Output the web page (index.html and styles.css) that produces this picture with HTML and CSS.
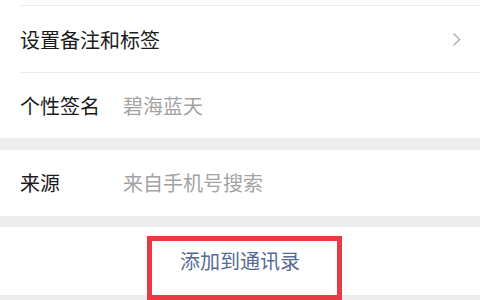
FILE: index.html
```html
<!DOCTYPE html>
<html lang="zh-CN">
<head>
<meta charset="utf-8">
<link rel="stylesheet" href="styles.css">
</head>
<body>
<div class="page">
  <div class="group">
    <div class="stub"></div>
    <div class="row row-a">
      <span class="label">设置备注和标签</span>
      <svg class="chev" width="9" height="15" viewBox="0 0 9 15"><path d="M1.5 1.5 L7.5 7.5 L1.5 13.5" fill="none" stroke="#b5b5b5" stroke-width="1.6"/></svg>
    </div>
    <div class="row row-b">
      <span class="label key">个性签名</span>
      <span class="value">碧海蓝天</span>
    </div>
  </div>
  <div class="gap gap-a"></div>
  <div class="group">
    <div class="row row-c">
      <span class="label key">来源</span>
      <span class="value">来自手机号搜索</span>
    </div>
  </div>
  <div class="gap gap-b"></div>
  <div class="action">
    <span class="action-text">添加到通讯录</span>
    <div class="mark"></div>
  </div>
  <div class="rest"></div>
</div>
</body>
</html>
```

FILE: styles.css
```css
html, body {
  margin: 0;
  padding: 0;
  background: #ededed;
}
.page {
  width: 480px;
  height: 300px;
  overflow: hidden;
  font-family: "Noto Sans CJK SC", "Noto Sans", sans-serif;
  background: #ededed;
}
.group {
  background: #ffffff;
}
.stub {
  height: 5px;
  margin-left: 20px;
  border-bottom: 1px solid #ececec;
}
.row {
  display: flex;
  align-items: center;
  padding: 0 20px;
  box-sizing: border-box;
}
.row-a {
  height: 67px;
  justify-content: space-between;
  padding-right: 19px;
  position: relative;
}
.row-a::after {
  content: "";
  position: absolute;
  left: 20px;
  right: 0;
  bottom: 0;
  border-bottom: 1px solid #ececec;
}
.row-b {
  height: 65px;
}
.row-c {
  height: 66px;
}
.label {
  font-size: 20px;
  line-height: 24px;
  color: #1b1b1b;
}
.key {
  width: 103px;
  flex: none;
}
.value {
  font-size: 20px;
  line-height: 24px;
  color: #a3a3a3;
}
.chev {
  display: block;
}
.gap-a {
  height: 12px;
}
.gap-b {
  height: 11px;
}
.action {
  position: relative;
  height: 68px;
  background: #ffffff;
  display: flex;
  align-items: center;
  justify-content: center;
}
.action-text {
  font-size: 20px;
  line-height: 24px;
  color: #576b95;
  padding-right: 0;
}
.mark {
  position: absolute;
  left: 147px;
  top: 9px;
  width: 195px;
  height: 64px;
  box-sizing: border-box;
  border: 5px solid #e93a41;
}
.rest {
  height: 20px;
}
```
